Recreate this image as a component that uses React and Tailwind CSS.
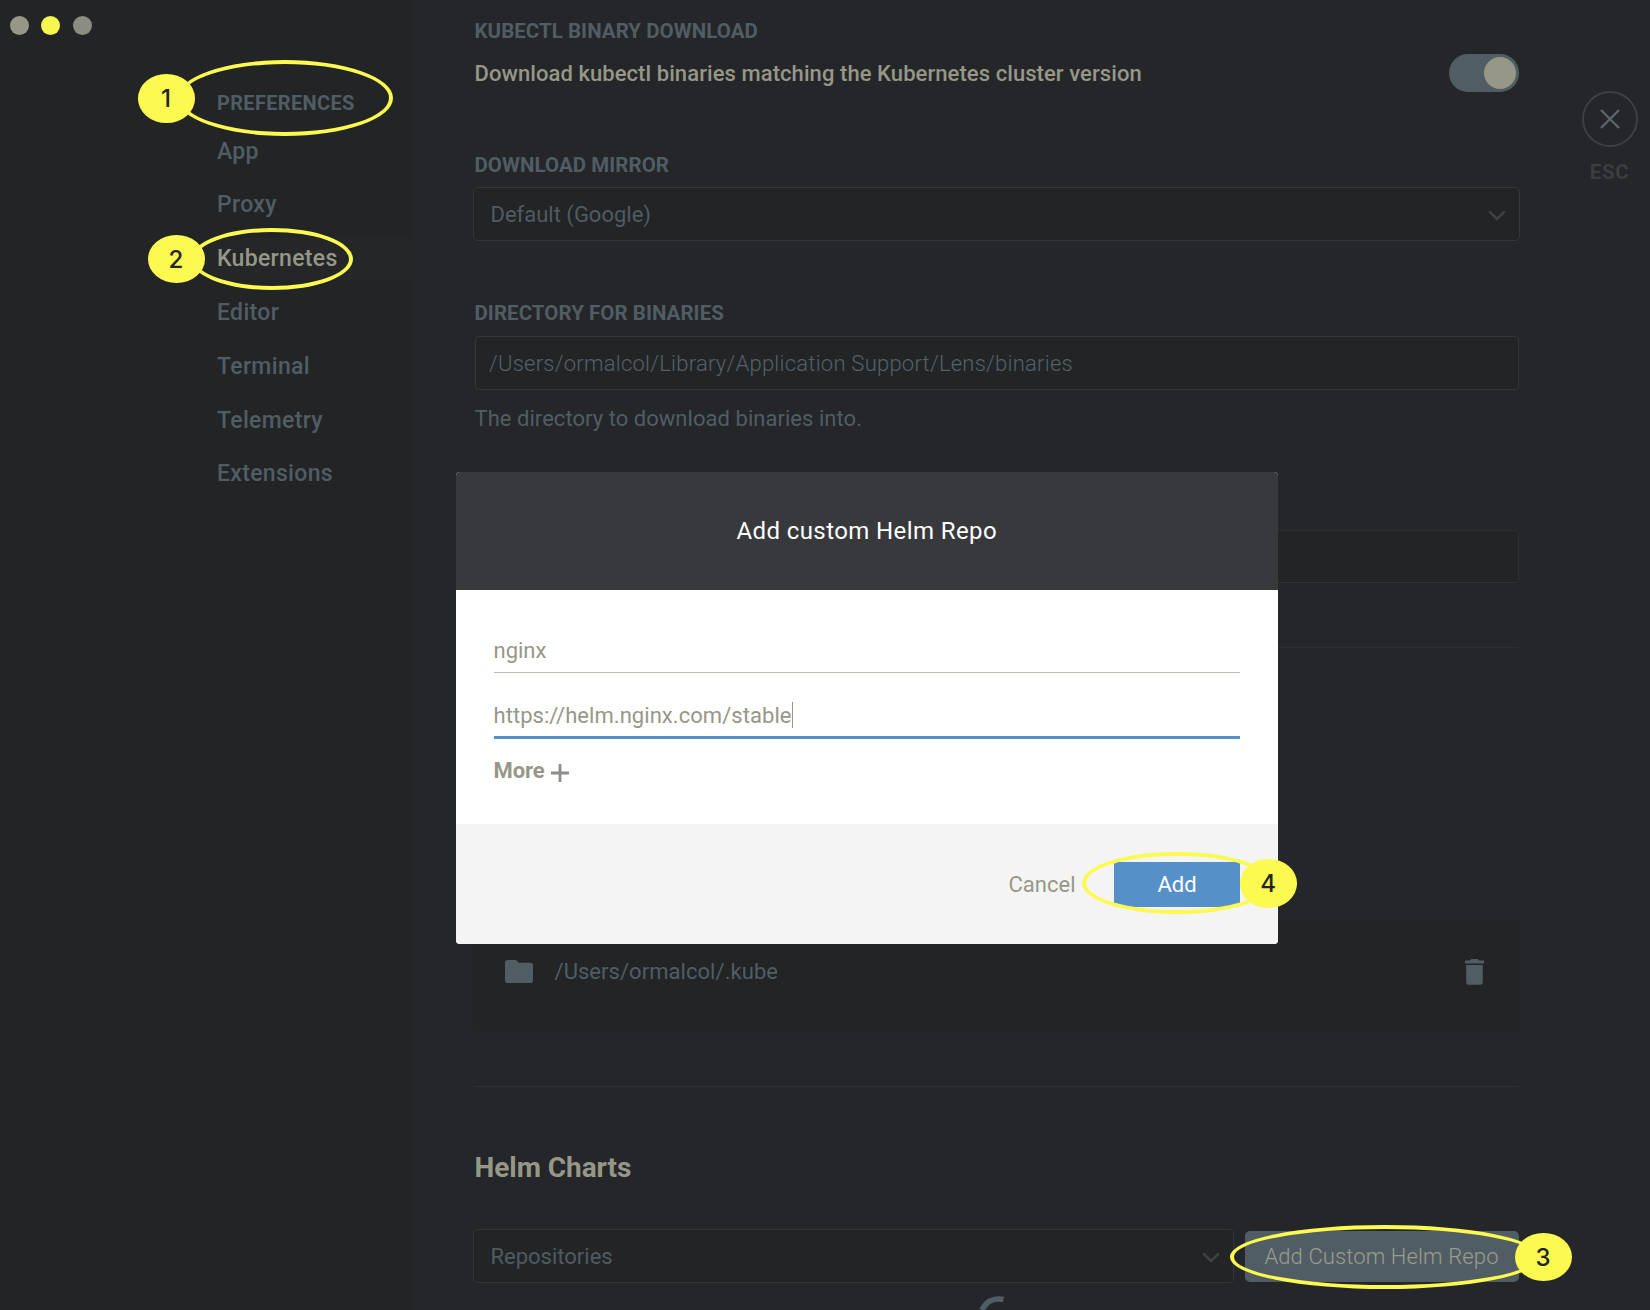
import React from "react";
import { clsx } from "clsx";

const NAV = [
  { label: "App" },
  { label: "Proxy" },
  { label: "Kubernetes", active: true },
  { label: "Editor" },
  { label: "Terminal" },
  { label: "Telemetry" },
  { label: "Extensions" },
];

function Heading({ className, children }) {
  return (
    <h3 className={clsx("h-[30px] pl-[1.5px] text-[20.5px] leading-[31px] font-bold tracking-[0.04px] text-[#515d65]", className)}>
      {children}
    </h3>
  );
}

function Chevron({ className }) {
  return (
    <svg width="18" height="11" viewBox="0 0 18 11" className={className} fill="none" stroke="currentColor" strokeWidth="2.6">
      <path d="M1.2 1.4 9 9 16.8 1.4" />
    </svg>
  );
}

function Select({ className, children }) {
  return (
    <div
      className={clsx(
        "flex h-[54px] items-center justify-between rounded-[5px] border border-[#343639] bg-[#222426] pl-[16.5px] text-[22px] text-[#505b63]",
        className
      )}
    >
      <span className="pt-[2px] leading-[30px]">{children}</span>
      <Chevron className="mt-[2px] mr-[13px] text-[#3f4145]" />
    </div>
  );
}

/* Highlight ring drawn over the interface, with its numbered step badge. */
function Callout({ box, badge, number }) {
  return (
    <>
      <div className={clsx("absolute rounded-[50%] border-4 border-[#fcfa50]", box)} />
      <div
        className={clsx(
          "absolute flex items-center justify-center rounded-[50%] bg-[#fcfa50] pt-[2px] pr-[1px] font-[Inter,'Liberation_Sans',sans-serif] text-[24px] font-medium text-[#222426]",
          badge
        )}
      >
        {number}
      </div>
    </>
  );
}

function Sidebar() {
  return (
    <aside className="h-full w-[413px] shrink-0 bg-[#222426]">
      <div className="flex gap-[12.5px] pt-[16px] pl-[9.5px]">
        <span className="h-[19px] w-[19px] rounded-full bg-[#969787]" />
        <span className="h-[19px] w-[19px] rounded-full bg-[#f8f750]" />
        <span className="h-[19px] w-[19px] rounded-full bg-[#8b8d82]" />
      </div>
      <nav className="mt-[53px] ml-[205px]">
        <div className="h-[30px] pl-[12px] text-[20px] leading-[30px] font-bold tracking-[0.33px] text-[#515d65]">
          PREFERENCES
        </div>
        <ul className="mt-[12.6px] flex flex-col gap-[11.8px]">
          {NAV.map(({ label, active }) => (
            <li
              key={label}
              className={clsx(
                "h-[42px] pl-[12px] text-[23px] leading-[42px] font-medium tracking-[0.32px]",
                active ? "bg-[#242628] text-[#969787]" : "text-[#515d65]"
              )}
            >
              {label}
            </li>
          ))}
        </ul>
      </nav>
    </aside>
  );
}

function Settings() {
  return (
    <section className="w-[1047px] shrink-0">
      <Heading className="mt-[16px]">KUBECTL BINARY DOWNLOAD</Heading>
      <div className="mt-[8px] flex h-[38px] items-center justify-between">
        <span className="pl-[1.5px] text-[22px] leading-[38px] pt-[2px] font-medium tracking-[0.075px] text-[#969787]">
          Download kubectl binaries matching the Kubernetes cluster version
        </span>
        <div className="mr-[1px] flex h-[38px] w-[70px] items-center justify-end rounded-full bg-[#515d65] pr-[3px]">
          <span className="h-[32px] w-[32px] rounded-full bg-[#969787]" />
        </div>
      </div>

      <Heading className="mt-[58px]">DOWNLOAD MIRROR</Heading>
      <Select className="mt-[7px] pr-0">Default (Google)</Select>

      <Heading className="mt-[57px]">DIRECTORY FOR BINARIES</Heading>
      <div className="mt-[8px] mr-[1px] ml-[1.5px] flex h-[54px] items-center rounded-[4px] border border-[#343639] bg-[#222426] pl-[13.5px] text-[22px] font-light tracking-[0.24px] text-[#566169]">
        /Users/ormalcol/Library/Application Support/Lens/binaries
      </div>
      <p className="mt-[13px] h-[30px] pl-[1.5px] text-[22px] leading-[31px] tracking-[0.04px] text-[#515d65]">
        The directory to download binaries into.
      </p>

      <div className="mt-[97px] mr-[1px] ml-[1.5px] h-[53px] rounded-[4px] border border-[#2e3033] bg-[#222426]" />
      <hr className="mx-[1px] mt-[64px] border-t border-[#2c2e31]" />

      <div className="mt-[272px] -ml-[2px] flex h-[112px] w-[1050px] rounded-[9px] bg-[#222426] pt-[39px] pr-[37px] pl-[34px]">
        <svg width="28" height="23" viewBox="0 0 28 23" className="mt-[1px]" fill="#515d65">
          <path d="M2.8 0H11l2.8 2.8h11.4A2.8 2.8 0 0 1 28 5.6v14.6a2.8 2.8 0 0 1-2.8 2.8H2.8A2.8 2.8 0 0 1 0 20.2V2.8A2.8 2.8 0 0 1 2.8 0Z" />
        </svg>
        <span className="-mt-[2px] ml-[21.5px] h-[30px] text-[22px] leading-[30px] tracking-[0.05px] text-[#515d65]">
          /Users/ormalcol/.kube
        </span>
        <svg width="19" height="26" viewBox="0 0 19 26" className="ml-auto" fill="#515d65">
          <path d="M0 1.5H4.8L6.3 0h6.4l1.5 1.5H19v3H0ZM1.2 6h16.6v16.9a2.8 2.8 0 0 1-2.8 2.8H4a2.8 2.8 0 0 1-2.8-2.8Z" />
        </svg>
      </div>
      <hr className="mx-[1px] mt-[54px] border-t border-[#2e3033]" />

      <h2 className="mt-[61px] h-[40px] pl-[1.5px] text-[28px] leading-[40px] font-bold tracking-[-0.05px] text-[#969787]">
        Helm Charts
      </h2>
      <div className="mt-[41px] flex h-[54px] items-center">
        <Select className="w-[761px]">Repositories</Select>
        <div className="ml-[11px] flex h-[51px] w-[274px] items-center justify-center rounded-[5px] bg-[#515d65] pr-[1px] text-[22px] font-light tracking-[0.12px] text-[#9c9c8b]">
          Add Custom Helm Repo
        </div>
      </div>
      <svg width="44" height="14" viewBox="0 0 44 14" className="mt-[13px] ml-[503px]" fill="none" stroke="#515d65" strokeWidth="5.6">
        <path d="M6 14C10 5.500 18 1.500 27.500 3.500" />
      </svg>
    </section>
  );
}

function CloseButton() {
  return (
    <div className="mt-[90.5px] ml-[60.5px] flex w-[58px] flex-col items-center">
      <div className="flex h-[56px] w-[56px] items-center justify-center rounded-full border-[2.5px] border-[#3d3f43]">
        <svg width="20" height="20" viewBox="0 0 20 20" fill="none" stroke="#5a676e" strokeWidth="2.4">
          <path d="M1 1 19 19M19 1 1 19" />
        </svg>
      </div>
      <span className="mt-[10px] text-[20.5px] leading-[30px] font-bold tracking-[0.7px] text-[#3b3d41]">ESC</span>
    </div>
  );
}

function Dialog() {
  return (
    <div className="absolute top-[472px] left-[455.5px] flex h-[472px] w-[822.5px] flex-col overflow-hidden rounded-[4px] bg-white text-[22px] text-[#969787]">
      <header className="h-[118px] bg-[#38393d] text-center text-[24px] leading-[119px] tracking-[0.4px] text-white">
        Add custom Helm Repo
      </header>
      <div className="h-[234px] px-[38px] pt-[46px]">
        <div className="h-[37px] border-b border-[#bcbcb2] leading-[30px]">nginx</div>
        <div className="mt-[27px] flex h-[39px] border-b-[3px] border-[#5590c9] leading-[32px] tracking-[0.05px]">
          <span>https://helm.nginx.com/stable</span>
          <span className="mt-[2px] h-[26px] w-px bg-[#969787]" />
        </div>
        <div className="mt-[16px] flex h-[32px] items-center">
          <span className="leading-[30px] font-bold tracking-[-0.1px]">More</span>
          <svg width="18" height="18" viewBox="0 0 18 18" className="mt-[3px] ml-[6px]" fill="none" stroke="#8a9088" strokeWidth="2.8">
            <path d="M9 0V18M0 9H18" />
          </svg>
        </div>
      </div>
      <footer className="flex h-[120px] items-start justify-end bg-[#f4f4f4] pt-[38px] pr-[38px]">
        <span className="mr-[38.5px] leading-[45px]">Cancel</span>
        <span className="h-[45px] w-[126px] rounded-[3px] bg-[#5590c9] text-center leading-[45px] text-white">Add</span>
      </footer>
    </div>
  );
}

export default function App() {
  return (
    <div className="relative flex h-[1310px] w-[1650px] overflow-hidden bg-[#242629] font-[Roboto,sans-serif]">
      <Sidebar />
      <main className="flex min-w-0 flex-1 pl-[60px]">
        <Settings />
        <CloseButton />
      </main>
      <Dialog />
      <Callout box="left-[177px] top-[59.5px] h-[76px] w-[216px]" badge="left-[138px] top-[74px] h-[48.5px] w-[57px]" number="1" />
      <Callout box="left-[191px] top-[227.5px] h-[62px] w-[162px]" badge="left-[148px] top-[234.5px] h-[48px] w-[57px]" number="2" />
      <Callout box="left-[1230px] top-[1225px] h-[63.5px] w-[310px]" badge="left-[1515px] top-[1232.5px] h-[48.5px] w-[57px]" number="3" />
      <Callout box="left-[1082px] top-[851.5px] h-[62.5px] w-[190px]" badge="left-[1240px] top-[859px] h-[48.5px] w-[57px]" number="4" />
    </div>
  );
}
